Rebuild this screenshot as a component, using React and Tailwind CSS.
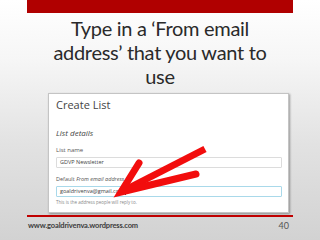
export default function App() {
  return (
    <div
      className="relative w-[320px] h-[240px] overflow-hidden flex flex-col"
      style={{ background: "linear-gradient(180deg, #ffffff 0%, #f6f6f6 25%, #e2e2e2 60%, #d2d2d2 100%)" }}
    >
      <div className="mx-[27px] h-[13px] bg-[#b00000] shrink-0" />
      <div
        className="mt-[3px] text-center text-[20px] leading-[24px] text-[#2a2a2a] tracking-[-0.3px]"
        style={{ fontFamily: "Lato, 'Open Sans', sans-serif" }}
      >
        <div>Type in a ‘From email</div>
        <div>address’ that you want to</div>
        <div>use</div>
      </div>
      <div
        className="mt-[5px] ml-[48px] w-[241px] h-[120px] bg-white border border-[#c4c4c4] shadow-[1px_1px_2px_rgba(0,0,0,0.35)] pl-[7px] pr-[6px] shrink-0"
        style={{ fontFamily: "'Open Sans', sans-serif" }}
      >
        <div className="mt-[4px] text-[11px] leading-[14px] text-[#444]">Create List</div>
        <div className="mt-[16px] text-[8px] leading-[10px] italic text-[#444]">List details</div>
        <div className="mt-[8px] text-[6px] leading-[8px] text-[#555]">List name</div>
        <div className="mt-[3px] h-[11px] border border-[#dcdcdc] rounded-[1px] flex items-center pl-[3px] text-[5.5px] text-[#444]">
          GDVP Newsletter
        </div>
        <div className="mt-[7px] text-[5.5px] leading-[8px] text-[#555]">
          Default <span className="italic">From email address</span>
        </div>
        <div className="mt-[3px] h-[11px] border border-[#a9d9ea] rounded-[1px] flex items-center pl-[3px] text-[5.5px] text-[#444]">
          goaldrivenva@gmail.com<span className="inline-block w-[0.5px] h-[6px] bg-[#333] ml-[0.5px]" />
        </div>
        <div className="mt-[2px] text-[4.5px] leading-[7px] text-[#888]">This is the address people will reply to.</div>
      </div>
      <div className="mt-[2px] mx-[27px] h-[1.5px] bg-[#c00000] shrink-0" />
      <div
        className="mx-[28px] mt-[3px] flex justify-between items-center leading-[12px] text-[#3c3c3c]"
        style={{ fontFamily: "Lato, sans-serif" }}
      >
        <span className="font-bold text-[7.5px] tracking-[-0.15px]">www.goaldrivenva.wordpress.com</span>
        <span className="mr-[3px] text-[9px] text-[#555]">40</span>
      </div>
      <svg className="absolute left-0 top-0" width="320" height="240" viewBox="0 0 320 240">
        <line x1="121" y1="192" x2="205" y2="149" stroke="#f20d0d" strokeWidth="7" />
        <polyline
          points="139,163 121,192 196,174"
          fill="none"
          stroke="#f20d0d"
          strokeWidth="7"
          strokeLinejoin="miter"
          strokeLinecap="round"
        />
      </svg>
    </div>
  );
}
